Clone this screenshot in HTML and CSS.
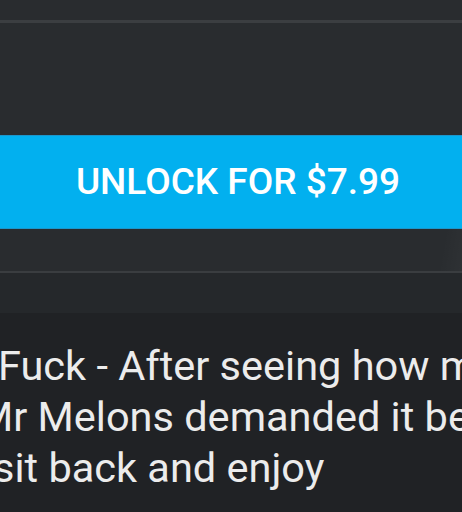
FILE: index.html
```html
<!DOCTYPE html>
<html>
<head>
<meta charset="utf-8">
<link rel="stylesheet" href="styles.css">
</head>
<body>
<div class="page">
  <div class="header-space"></div>
  <div class="rule rule-top"></div>
  <section class="panel">
    <button class="unlock-btn">UNLOCK FOR $7.99</button>
  </section>
  <div class="rule rule-bottom"></div>
  <div class="band"></div>
  <section class="desc">
    <div class="line line-1">Fuck - After seeing how much</div>
    <div class="line line-2">Mr Melons demanded it be</div>
    <div class="line line-3">sit back and enjoy</div>
  </section>
</div>
</body>
</html>
```

FILE: styles.css
```css
html, body {
  margin: 0;
  padding: 0;
}
body {
  width: 462px;
  height: 512px;
  overflow: hidden;
  background: #292c2f;
  font-family: Roboto, "Liberation Sans", sans-serif;
}
.page {
  display: flex;
  flex-direction: column;
  height: 512px;
  background:
    linear-gradient(100deg, rgba(0,0,0,0) 88%, rgba(255,255,255,0.025) 92%, rgba(255,255,255,0.02) 100%),
    #292c2f;
}
.header-space {
  height: 20px;
}
.rule {
  background: #3b3e41;
}
.rule-top {
  height: 3px;
}
.panel {
  padding-top: 112px;
  padding-bottom: 42px;
}
.unlock-btn {
  display: block;
  width: 100%;
  height: 94px;
  margin: 0;
  padding: 0 0 0 14px;
  border: 1px solid #1a96cc;
  border-left: none;
  border-right: none;
  background: #02b0ef;
  color: #ffffff;
  font-family: Roboto, "Liberation Sans", sans-serif;
  font-weight: 500;
  font-size: 37px;
  letter-spacing: 0;
  text-align: center;
  line-height: 90px;
}
.rule-bottom {
  height: 2px;
  background: #3a3d40;
}
.band {
  height: 40px;
  background: #25282b;
}
.desc {
  flex: 1;
  background: #202225;
  padding-top: 27px;
  color: #ececec;
  font-size: 41.5px;
  line-height: 51px;
  white-space: nowrap;
  overflow: hidden;
}
.line-1 {
  margin-left: -2px;
}
.line-2 {
  margin-left: -23px;
}
.line-3 {
  margin-left: -7px;
}
```
